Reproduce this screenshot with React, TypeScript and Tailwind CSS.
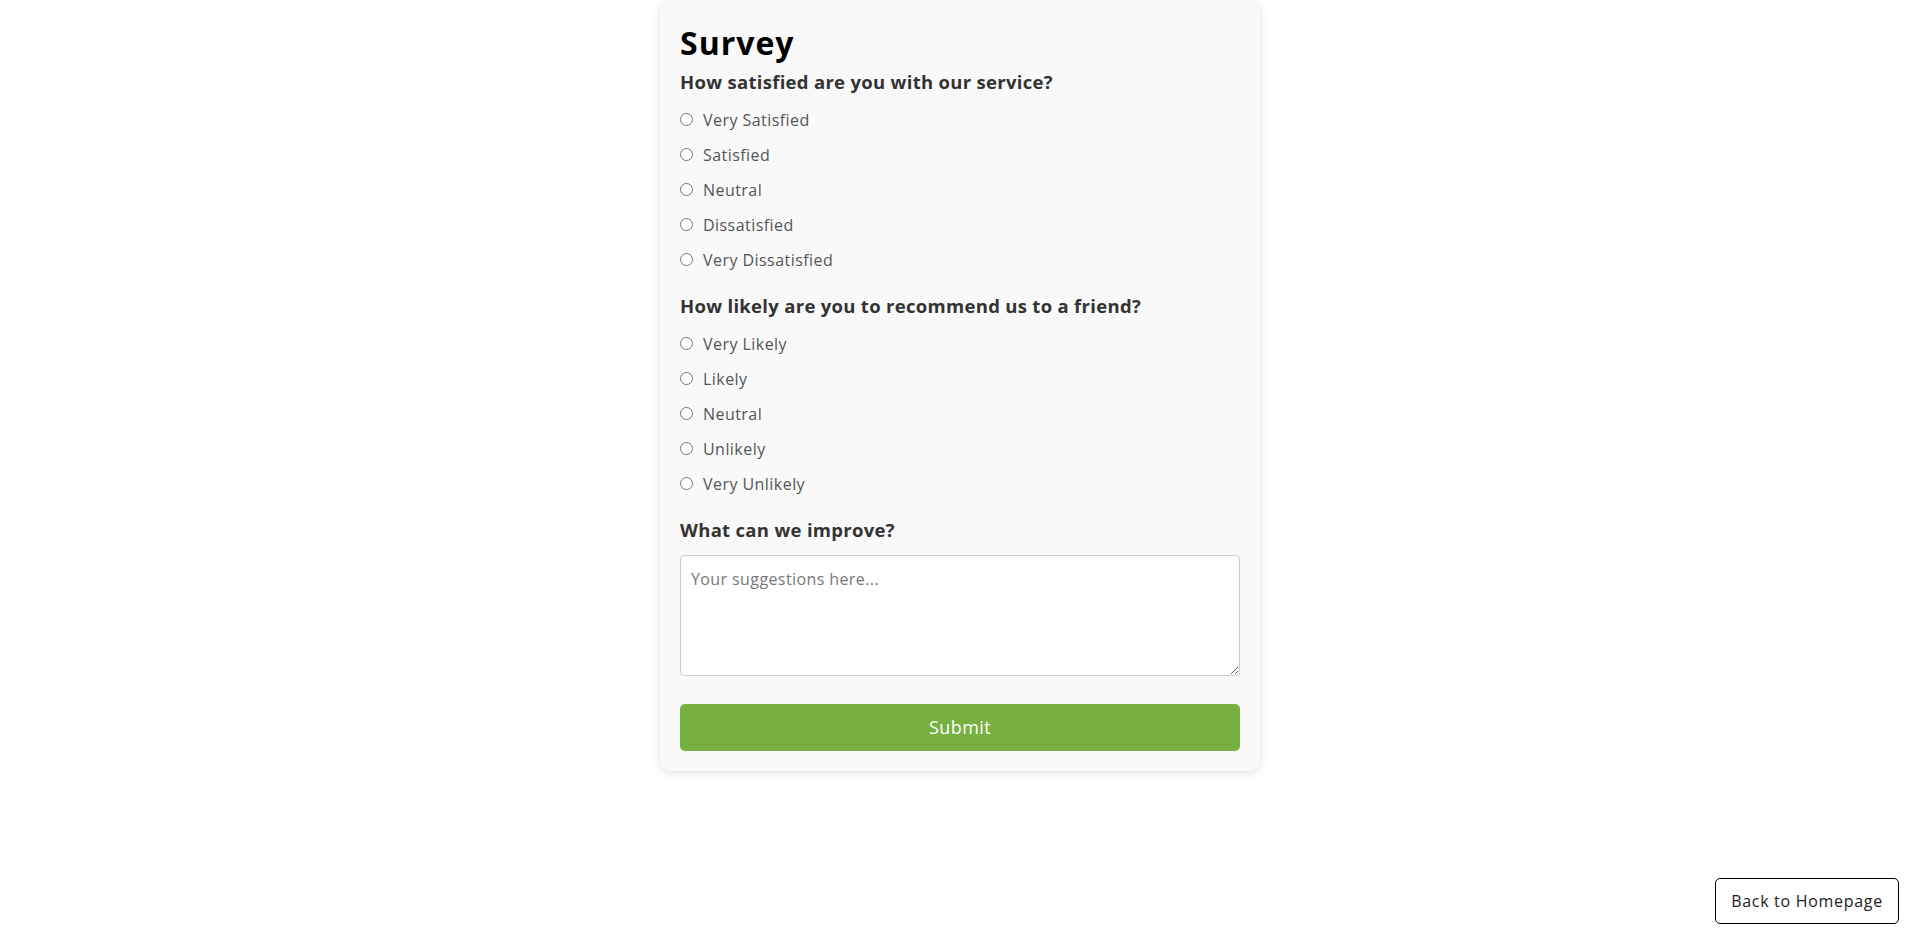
import React from "react";

const q1 = ["Very Satisfied", "Satisfied", "Neutral", "Dissatisfied", "Very Dissatisfied"];
const q2 = ["Very Likely", "Likely", "Neutral", "Unlikely", "Very Unlikely"];

function Question({ title, name, options }: { title: string; name: string; options: string[] }) {
  return (
    <div className="mb-[17px]">
      <h3 className="mb-[8px] text-[18.5px] font-bold leading-[24px] tracking-[0.3px] text-[#333]">{title}</h3>
      <div className="flex flex-col">
        {options.map((o) => (
          <label key={o} className="flex h-[35px] items-center text-[16px] tracking-[0.45px] text-[#555]">
            <input type="radio" name={name} className="m-0 mr-[10px] h-[13px] w-[13px]" />
            <span>{o}</span>
          </label>
        ))}
      </div>
    </div>
  );
}

export default function App() {
  return (
    <div
      className="min-h-[945px] w-full bg-white"
      style={{ fontFamily: '"Open Sans", "Noto Sans", sans-serif' }}
    >
      <div className="mx-auto w-[600px] rounded-[10px] bg-[#f9f9f9] p-[20px] shadow-[0_2px_8px_rgba(0,0,0,0.12)]">
        <h1 className="mb-[4px] text-[32px] font-bold leading-[46px] tracking-[1px] text-black">Survey</h1>
        <Question title="How satisfied are you with our service?" name="satisfaction" options={q1} />
        <Question title="How likely are you to recommend us to a friend?" name="recommend" options={q2} />
        <div>
          <h3 className="mb-[13px] text-[18.5px] font-bold leading-[24px] tracking-[0.3px] text-[#333]">What can we improve?</h3>
          <textarea
            placeholder="Your suggestions here..."
            className="block h-[121px] w-full rounded-[4px] border border-[#ccc] bg-white px-[10px] py-[11px] text-[16px] leading-[24px] tracking-[0.4px] text-[#333] placeholder:text-[#777]"
          />
        </div>
        <button className="mt-[28px] flex h-[47px] w-full items-center justify-center rounded-[5px] bg-[#77b041] text-[18px] tracking-[0.4px] text-white">
          Submit
        </button>
      </div>
      <button className="fixed bottom-[21px] right-[21px] h-[46px] w-[184px] rounded-[5px] border border-black bg-white text-[16px] tracking-[0.7px] text-[#222]">
        Back to Homepage
      </button>
    </div>
  );
}
